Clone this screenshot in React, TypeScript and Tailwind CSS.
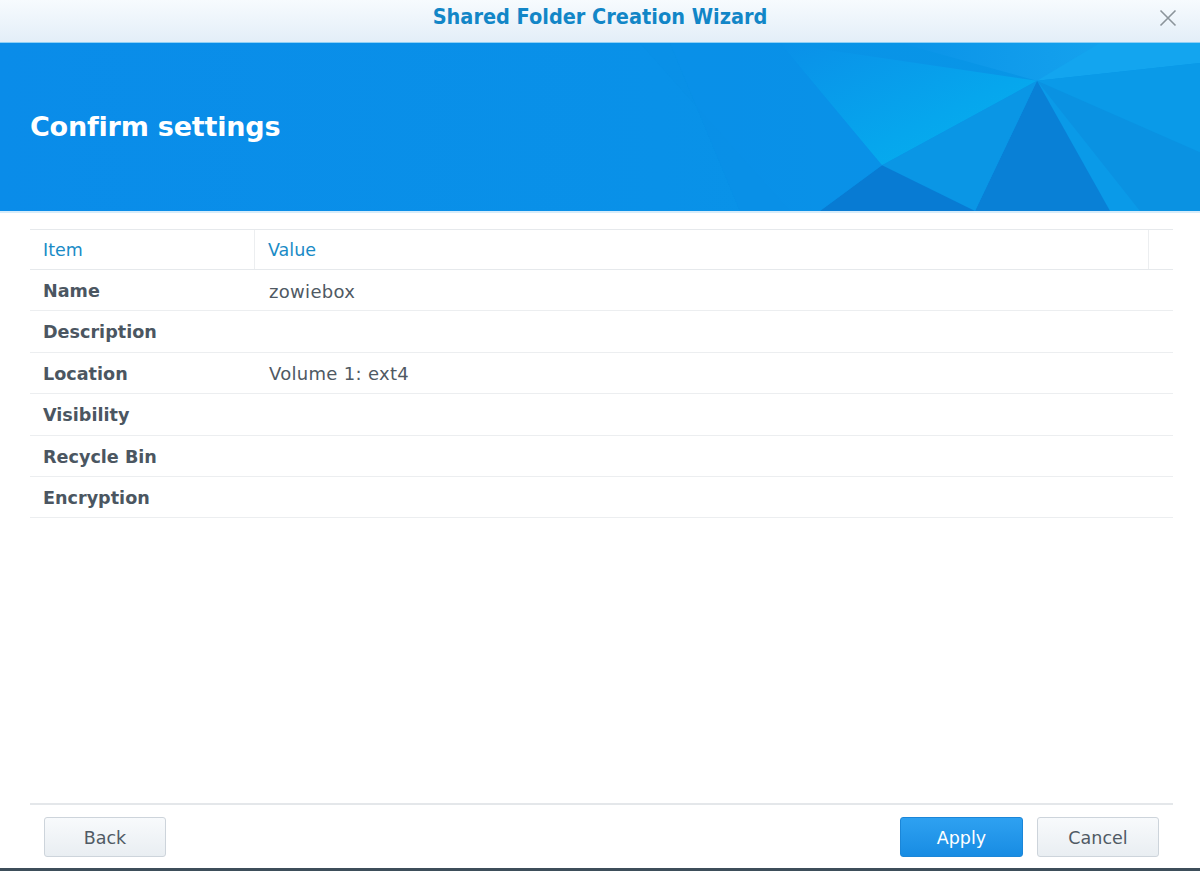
import React from "react";

const rows: [string, string][] = [
  ["Name", "zowiebox"],
  ["Description", ""],
  ["Location", "Volume 1: ext4"],
  ["Visibility", ""],
  ["Recycle Bin", ""],
  ["Encryption", ""],
];

function Banner() {
  return (
    <div className="relative h-[171px] bg-[#0a8de9] overflow-hidden border-t border-[#8fd0f6] border-b-2 border-b-[#d6ecfa]">
      <svg
        className="absolute inset-0 w-full h-full"
        viewBox="0 0 1200 169"
        preserveAspectRatio="none"
      >
        <defs>
          <linearGradient id="base" x1="0" y1="0" x2="1" y2="0">
            <stop offset="0" stopColor="#0a8ce9" />
            <stop offset="0.55" stopColor="#0991e8" />
            <stop offset="1" stopColor="#0898e6" />
          </linearGradient>
          <linearGradient id="cyan" x1="0" y1="0" x2="1" y2="1">
            <stop offset="0" stopColor="#0a90e8" />
            <stop offset="0.6" stopColor="#06a6ed" />
            <stop offset="1" stopColor="#07b2ef" />
          </linearGradient>
          <linearGradient id="topr" x1="0" y1="0" x2="1" y2="0">
            <stop offset="0" stopColor="#0a93e8" />
            <stop offset="1" stopColor="#1aa9f0" />
          </linearGradient>
        </defs>
        <rect x="0" y="0" width="1200" height="169" fill="url(#base)" />
        <polygon points="670,0 740,169 790,169 640,0" fill="#0a8fe6" opacity="0.5" />
        <polygon points="780,0 1037,38 882,123" fill="url(#cyan)" />
        <polygon points="900,0 1200,0 1037,38" fill="url(#topr)" />
        <polygon points="1100,0 1200,0 1200,20 1037,38" fill="#13a5ef" />
        <polygon points="1037,38 1200,20 1200,169 1110,169" fill="#0a9ae8" />
        <polygon points="1037,38 1200,110 1200,169 1140,169" fill="#0a92e2" />
        <polygon points="1037,38 975,169 1110,169" fill="#0980d6" />
        <polygon points="882,123 1037,38 975,169" fill="#0a96e5" />
        <polygon points="882,123 820,169 975,169" fill="#087bd3" />
        <polygon points="780,0 882,123 820,169 740,169 670,0" fill="#0a8fe7" opacity="0.6" />
      </svg>
      <div className="relative h-full flex items-center pl-[30px]">
        <h1 className="text-white font-bold text-[27px] font-['DejaVu_Sans','Verdana',sans-serif] tracking-[-0.2px]">
          Confirm settings
        </h1>
      </div>
    </div>
  );
}

function Btn({ label, primary }: { label: string; primary?: boolean }) {
  return (
    <button
      className={
        primary
          ? "w-[123px] h-[40px] pt-[2px] rounded-[3px] border border-[#1b86d8] bg-gradient-to-b from-[#2ea1f1] to-[#178ce3] text-white text-[17.5px]"
          : "w-[122px] h-[40px] pt-[2px] rounded-[3px] border border-[#cdd4db] bg-gradient-to-b from-[#f8fafc] to-[#e9eef2] text-[#505a64] text-[17.5px]"
      }
    >
      {label}
    </button>
  );
}

export default function App() {
  return (
    <div className="w-[1200px] h-[871px] flex flex-col bg-white font-['DejaVu_Sans','Verdana',sans-serif] overflow-hidden">
      <div className="relative h-[42px] flex items-center justify-center pb-[8px] bg-gradient-to-b from-[#f7fbfe] to-[#e3eef8]">
        <span className="text-[#1286c7] font-bold text-[21.5px] font-['DejaVu_Sans_Condensed','DejaVu_Sans',sans-serif]">
          Shared Folder Creation Wizard
        </span>
        <svg className="absolute right-[23px] top-[9px]" width="18" height="18" viewBox="0 0 18 18">
          <path d="M1.5 1.5 L16.5 16.5 M16.5 1.5 L1.5 16.5" stroke="#8b949b" strokeWidth="1.6" />
        </svg>
      </div>
      <Banner />
      <div className="flex-1 flex flex-col px-[30px] pt-[16px]">
        <div className="w-[1143px]">
          <div className="h-[41px] flex border-t border-b border-[#e6e9ec] text-[#1a8bc6] text-[17.5px]">
            <div className="w-[225px] pl-[13px] pt-[2px] flex items-center border-r border-[#eceef0]">Item</div>
            <div className="flex-1 pl-[13px] pt-[2px] flex items-center border-r border-[#eceef0]">Value</div>
            <div className="w-[24px]" />
          </div>
          {rows.map(([k, v]) => (
            <div key={k} className="h-[41.4px] flex border-b border-[#eceef0] text-[17.6px]">
              <div className="w-[225px] pl-[13px] pt-[2px] flex items-center font-bold text-[#4b5661]">{k}</div>
              <div className="flex-1 pl-[14px] pt-[2px] flex items-center text-[#4f5963] text-[18px] tracking-[0.3px]">{v}</div>
            </div>
          ))}
        </div>
      </div>
      <div className="px-[30px]">
        <div className="w-[1143px] border-t-2 border-[#e4e7ea] pt-[12px] pb-[11px] flex items-center">
          <div className="pl-[14px]">
            <Btn label="Back" />
          </div>
          <div className="flex-1" />
          <div className="flex gap-[14px] pr-[14px]">
            <Btn label="Apply" primary />
            <Btn label="Cancel" />
          </div>
        </div>
      </div>
      <div className="h-[3px] bg-[#3d4e5a]" />
    </div>
  );
}
